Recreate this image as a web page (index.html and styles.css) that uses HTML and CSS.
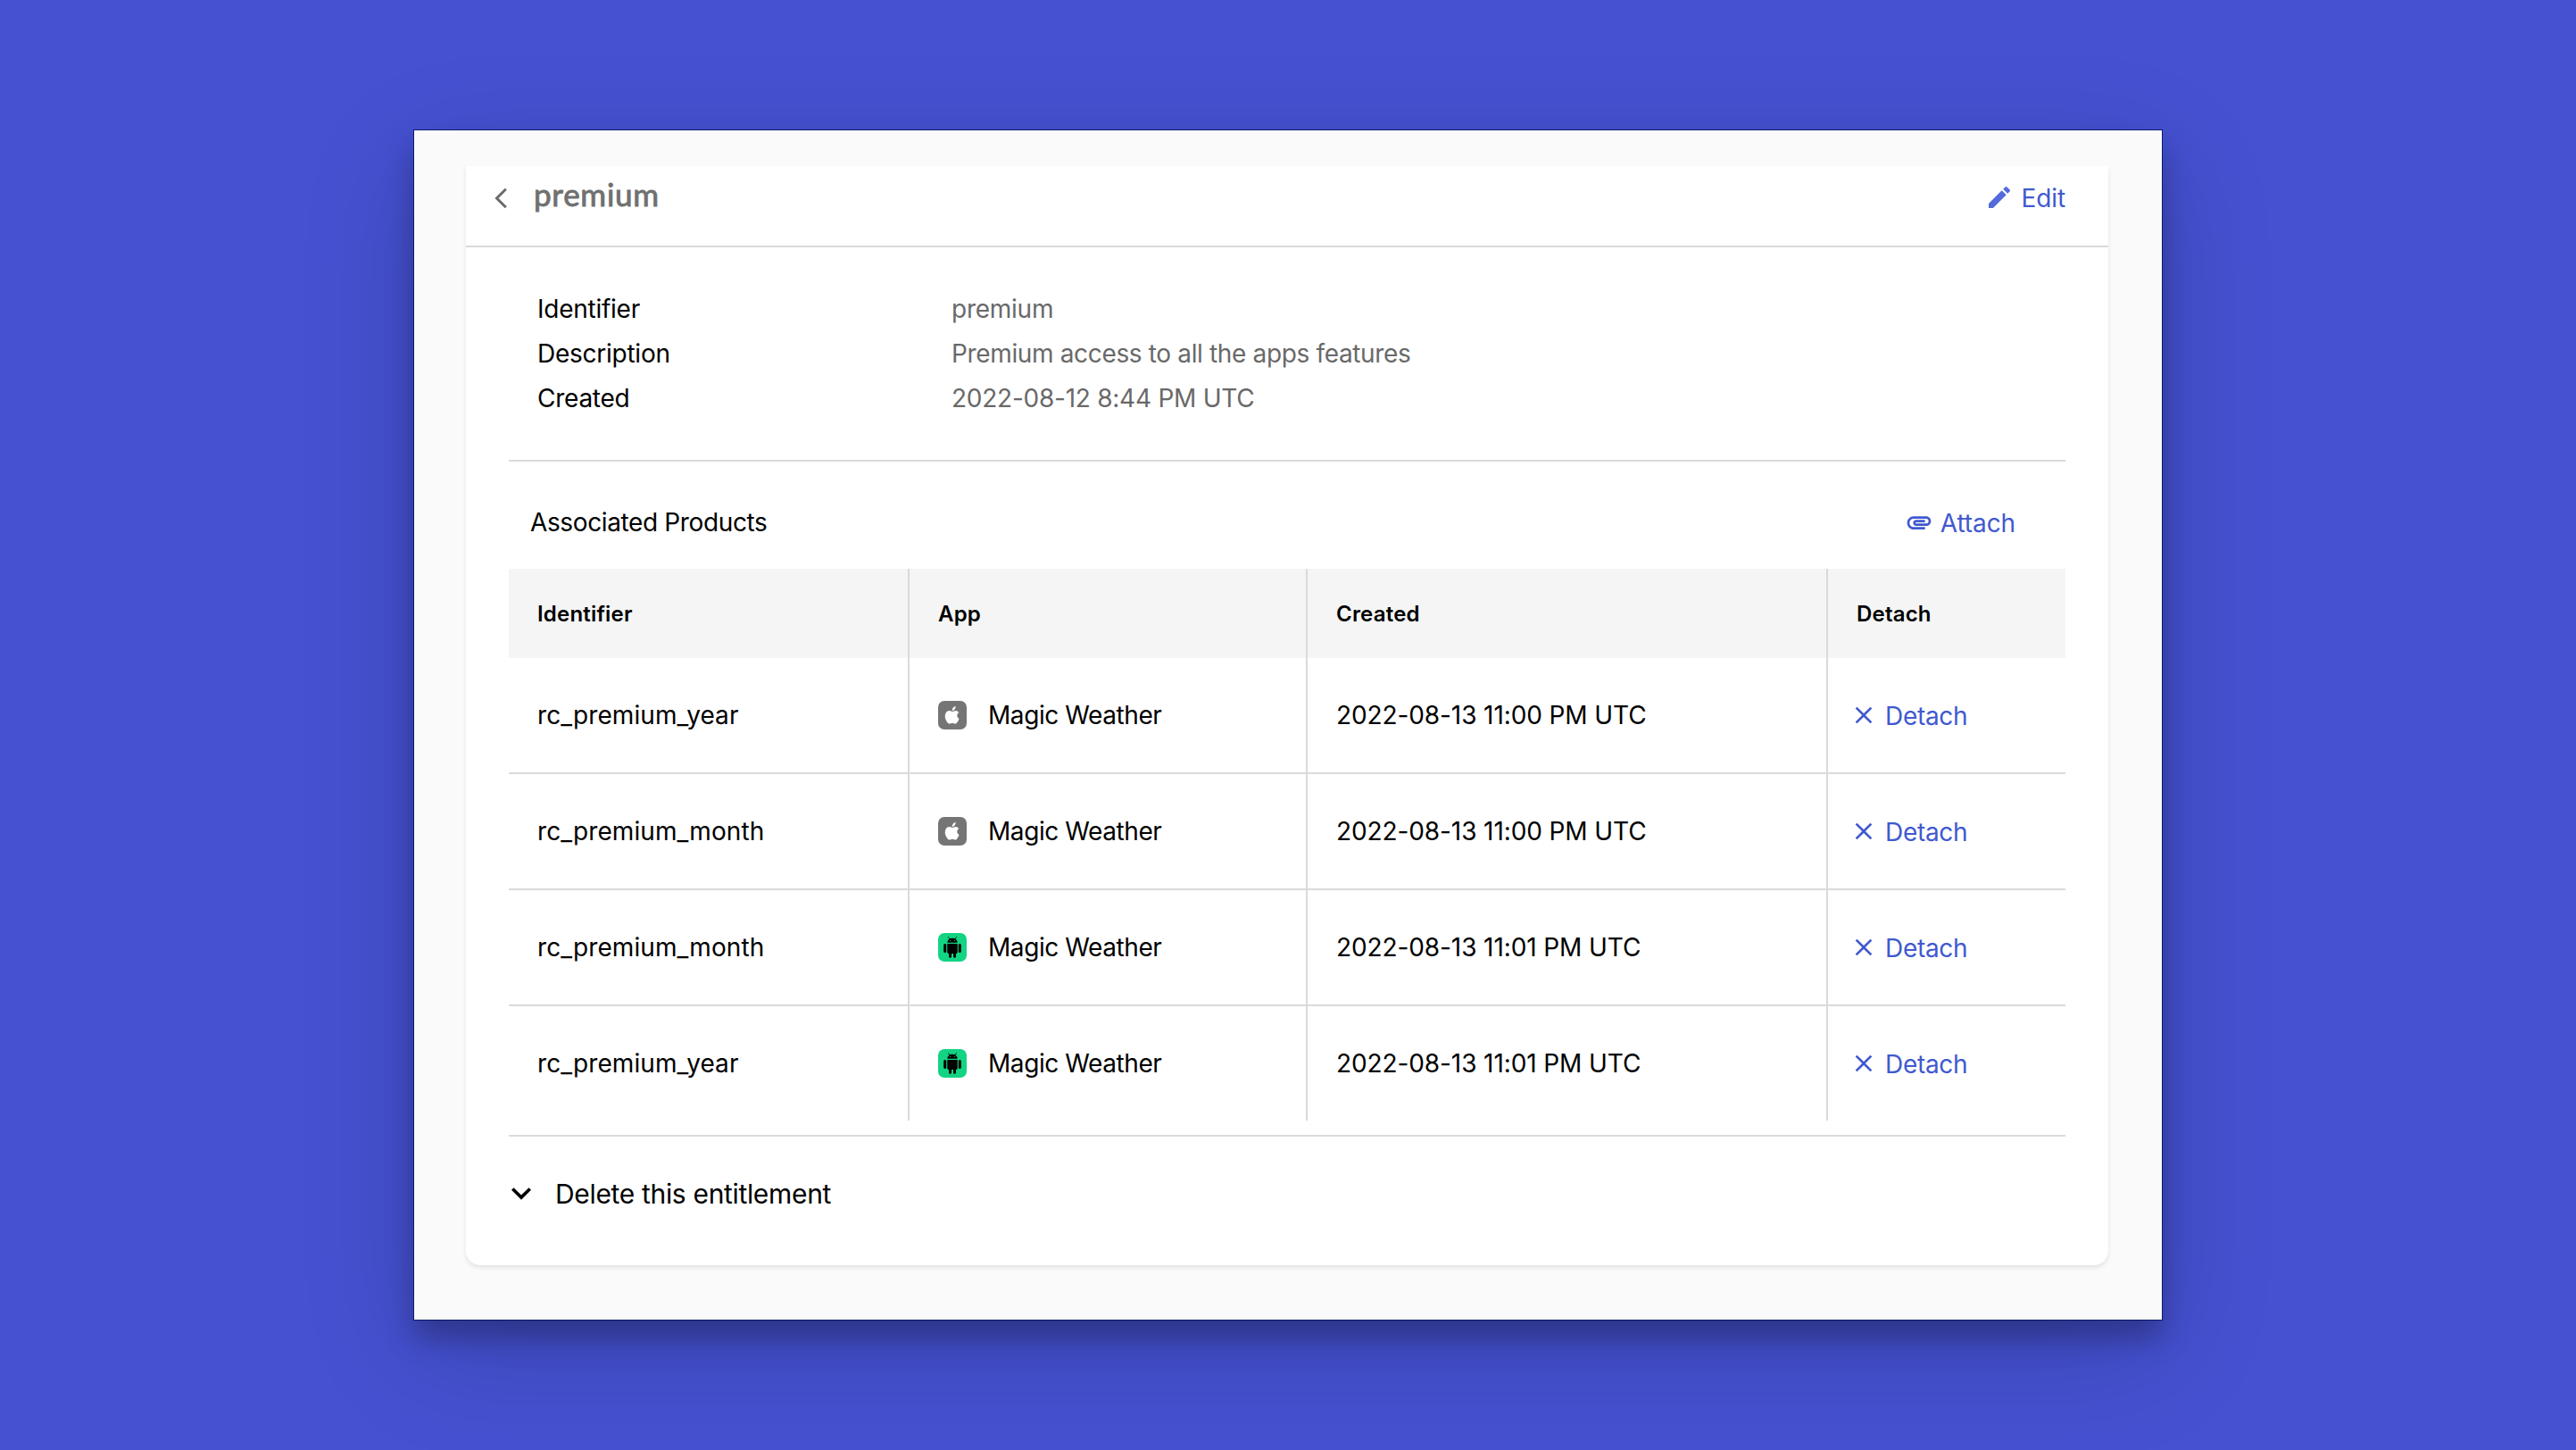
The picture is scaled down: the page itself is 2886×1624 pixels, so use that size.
FILE: index.html
```html
<!DOCTYPE html>
<html lang="en">
<head>
<meta charset="utf-8">
<title>premium</title>
<link rel="stylesheet" href="styles.css">
</head>
<body>
<svg class="sprite" aria-hidden="true">
  <symbol id="close" viewBox="0 0 24 24"><path d="M19 6.41 17.59 5 12 10.59 6.41 5 5 6.41 10.59 12 5 17.59 6.41 19 12 13.41 17.59 19 19 17.59 13.41 12z"/></symbol>
  <symbol id="apple" viewBox="0 0 32 32">
    <rect width="32" height="32" rx="7" fill="#757575"/>
    <path fill="#fff" d="M19.6 6.1c.2 1.200-.3 2.400-1.100 3.300-.7.900-1.700 1.500-2.800 1.400-.2-1.100.4-2.300 1.100-3.100.7-.9 1.900-1.500 2.800-1.600zM23.200 13.300c-1.200.7-1.900 1.800-1.900 3.200 0 1.500.9 2.800 2.200 3.400-.3 1-.8 1.900-1.300 2.800-.8 1.300-1.600 2.900-3 2.900-1.300 0-1.700-.8-3.200-.8s-2 .8-3.200.8c-1.400 0-2.400-1.500-3.200-2.700-2.100-3.200-2.500-7.300-.9-9.500 1-1.500 2.500-2.300 4-2.300 1.400 0 2.300.8 3.500.8 1.100 0 1.900-.8 3.600-.8 1.300 0 2.600.8 3.400 2.200z"/>
  </symbol>
  <symbol id="android" viewBox="0 0 32 32">
    <rect width="32" height="32" rx="7" fill="#12d483"/>
    <path fill="none" stroke="#000" stroke-width=".9" stroke-linecap="round" d="M11.600 4.600 13 6.700M20.400 4.600 19 6.700"/>
    <path d="M10.300 10.700a5.700 5 0 0 1 11.400 0zM10.300 11.900h11.400v9.600a1.400 1.400 0 0 1-1.400 1.400H20v3.400a1.500 1.500 0 0 1-3 0v-3.400h-2v3.400a1.500 1.500 0 0 1-3 0v-3.400h-.3a1.400 1.400 0 0 1-1.400-1.400z"/>
    <rect x="6.200" y="11.900" width="3" height="10" rx="1.500"/>
    <rect x="22.800" y="11.900" width="3" height="10" rx="1.500"/>
    <circle cx="13.500" cy="8.500" r=".6" fill="#12d483"/><circle cx="18.500" cy="8.500" r=".6" fill="#12d483"/>
  </symbol>
</svg>
<main class="window">
  <article class="card">
    <header class="card-header">
      <svg class="back" viewBox="0 0 14 24"><path d="M12.800 1.800 2.500 12l10.300 10.200"/></svg>
      <h1 class="title">premium</h1>
      <a class="link edit"><svg class="icon pencil" viewBox="0 0 24 24"><path d="M3 17.250V21h3.750L17.810 9.940l-3.750-3.750L3 17.250zM20.710 7.040a1 1 0 0 0 0-1.410l-2.340-2.340a1 1 0 0 0-1.410 0l-1.830 1.830 3.750 3.750 1.830-1.830z"/></svg><span>Edit</span></a>
    </header>
    <div class="card-body">
      <dl class="details">
        <dt>Identifier</dt><dd>premium</dd>
        <dt>Description</dt><dd class="long">Premium access to all the apps features</dd>
        <dt>Created</dt><dd>2022-08-12 8:44 PM UTC</dd>
      </dl>
      <div class="products-bar">
        <h2 class="products-title">Associated Products</h2>
        <a class="link attach"><svg class="icon" viewBox="0 0 24 24"><path d="M2 12.500C2 9.460 4.460 7 7.500 7H18c2.210 0 4 1.790 4 4s-1.790 4-4 4H9.500C8.120 15 7 13.880 7 12.500S8.120 10 9.500 10H17v2H9.410c-.55 0-.55 1 0 1H18c1.100 0 2-.9 2-2s-.9-2-2-2H7.500C5.570 9 4 10.570 4 12.500S5.570 16 7.500 16H17v2H7.500C4.460 18 2 15.540 2 12.500z"/></svg><span>Attach</span></a>
      </div>
      <table class="products">
        <colgroup><col class="col-id"><col class="col-app"><col class="col-created"><col class="col-detach"></colgroup>
        <thead><tr><th>Identifier</th><th>App</th><th>Created</th><th>Detach</th></tr></thead>
        <tbody>
          <tr>
            <td class="id">rc_premium_year</td>
            <td><div class="app"><svg class="icon"><use href="#apple"/></svg><span>Magic Weather</span></div></td>
            <td class="date">2022-08-13 11:00 PM UTC</td>
            <td class="action"><a class="link"><svg class="icon"><use href="#close"/></svg><span>Detach</span></a></td>
          </tr>
          <tr>
            <td class="id">rc_premium_month</td>
            <td><div class="app"><svg class="icon"><use href="#apple"/></svg><span>Magic Weather</span></div></td>
            <td class="date">2022-08-13 11:00 PM UTC</td>
            <td class="action"><a class="link"><svg class="icon"><use href="#close"/></svg><span>Detach</span></a></td>
          </tr>
          <tr>
            <td class="id">rc_premium_month</td>
            <td><div class="app"><svg class="icon"><use href="#android"/></svg><span>Magic Weather</span></div></td>
            <td class="date">2022-08-13 11:01 PM UTC</td>
            <td class="action"><a class="link"><svg class="icon"><use href="#close"/></svg><span>Detach</span></a></td>
          </tr>
          <tr>
            <td class="id">rc_premium_year</td>
            <td><div class="app"><svg class="icon"><use href="#android"/></svg><span>Magic Weather</span></div></td>
            <td class="date">2022-08-13 11:01 PM UTC</td>
            <td class="action"><a class="link"><svg class="icon"><use href="#close"/></svg><span>Detach</span></a></td>
          </tr>
        </tbody>
      </table>
      <div class="delete">
        <svg class="expand" viewBox="6 8.590 12 7.410"><path d="M16.590 8.590 12 13.170 7.410 8.590 6 10l6 6 6-6z"/></svg>
        <span>Delete this entitlement</span>
      </div>
    </div>
  </article>
</main>
</body>
</html>
```
FILE: styles.css
```css
* {
  box-sizing: border-box;
}

body {
  margin: 0;
  height: 1624px;
  padding: 146px 464px;
  overflow: hidden;
  background: #4551d1;
  color: #000;
  font: 400 28px/32px Inter, "Liberation Sans", sans-serif;
  letter-spacing: -0.25px;
}

.sprite {
  display: none;
}

.window {
  height: 1332px;
  padding: 40px 60px 0 58px;
  background: #fafafa;
  box-shadow:
    0 0 0 1px rgba(0, 18, 90, 0.8),
    0 20px 30px rgba(0, 0, 0, 0.26),
    0 36px 120px rgba(0, 0, 0, 0.16);
}

.card {
  height: 1231px;
  background: #fff;
  border-radius: 0 0 16px 16px;
  box-shadow: 0 3px 5px rgba(0, 0, 0, 0.09);
}

.card-header {
  display: flex;
  align-items: center;
  height: 91px;
  padding: 0 48px 19px 32px;
  border-bottom: 2px solid #dadada;
}

.back {
  width: 14px;
  height: 24px;
  margin-top: 2px;
  fill: none;
  stroke: #6b6b6b;
  stroke-width: 3;
}

.title {
  margin: 0;
  padding: 0 0 9px 30px;
  color: #707070;
  font: 400 35px/36px Lato, "Liberation Sans", sans-serif;
  letter-spacing: 0.75px;
  -webkit-text-stroke: 0.9px #707070;
}

.link {
  display: flex;
  align-items: center;
  gap: 8px;
  color: #4159cf;
  letter-spacing: -0.1px;
}

.link span {
  padding-top: 2px;
}

.edit {
  margin-left: auto;
}

.icon {
  display: block;
  width: 32px;
  height: 32px;
  flex: none;
  fill: currentColor;
}

.pencil {
  color: #556bdb;
}

.card-body {
  padding: 0 48px;
}

.details {
  display: grid;
  grid-template-columns: 464px 1fr;
  grid-auto-rows: 50px;
  align-items: center;
  margin: 0;
  padding: 44px 32px;
  border-bottom: 2px solid #dadada;
}

.details dd {
  margin: 0;
  color: #696969;
}

.details .long {
  letter-spacing: -0.35px;
}

.products-bar {
  display: flex;
  align-items: center;
  justify-content: space-between;
  height: 120px;
  padding: 16px 56px 0 24px;
}

.products-title {
  margin: 0;
  font: inherit;
  letter-spacing: -0.37px;
}

.products {
  width: 1744px;
  table-layout: fixed;
  border-collapse: separate;
  border-spacing: 0;
}

.col-id {
  width: 449px;
}

.col-app {
  width: 446px;
}

.col-created {
  width: 583px;
}

.col-detach {
  width: 266px;
}

.products th,
.products td {
  padding: 0 0 0 32px;
  text-align: left;
  vertical-align: middle;
}

.products th {
  height: 100px;
  padding-top: 2px;
  background: #f5f5f5;
  font-size: 24px;
  font-weight: 600;
  letter-spacing: 0.2px;
}

.products td {
  height: 130px;
  border-bottom: 2px solid #dadada;
}

.products th:not(:last-child),
.products td:not(:last-child) {
  border-right: 2px solid #dadada;
}

.products tr:last-child td {
  height: 128px;
  border-bottom: 0;
}

.products .id {
  letter-spacing: 0.08px;
}

.products .date {
  letter-spacing: -0.1px;
}

.products .action {
  padding-left: 24px;
}

.action .link {
  letter-spacing: -0.3px;
}

.app {
  display: flex;
  align-items: center;
  gap: 24px;
  letter-spacing: -0.42px;
}

.delete {
  display: flex;
  align-items: center;
  gap: 27px;
  height: 146px;
  margin-top: 16px;
  padding: 0 0 16px 3px;
  border-top: 2px solid #dadada;
  font-size: 30px;
  letter-spacing: -0.33px;
}

.expand {
  width: 22px;
  height: 14px;
}
```
